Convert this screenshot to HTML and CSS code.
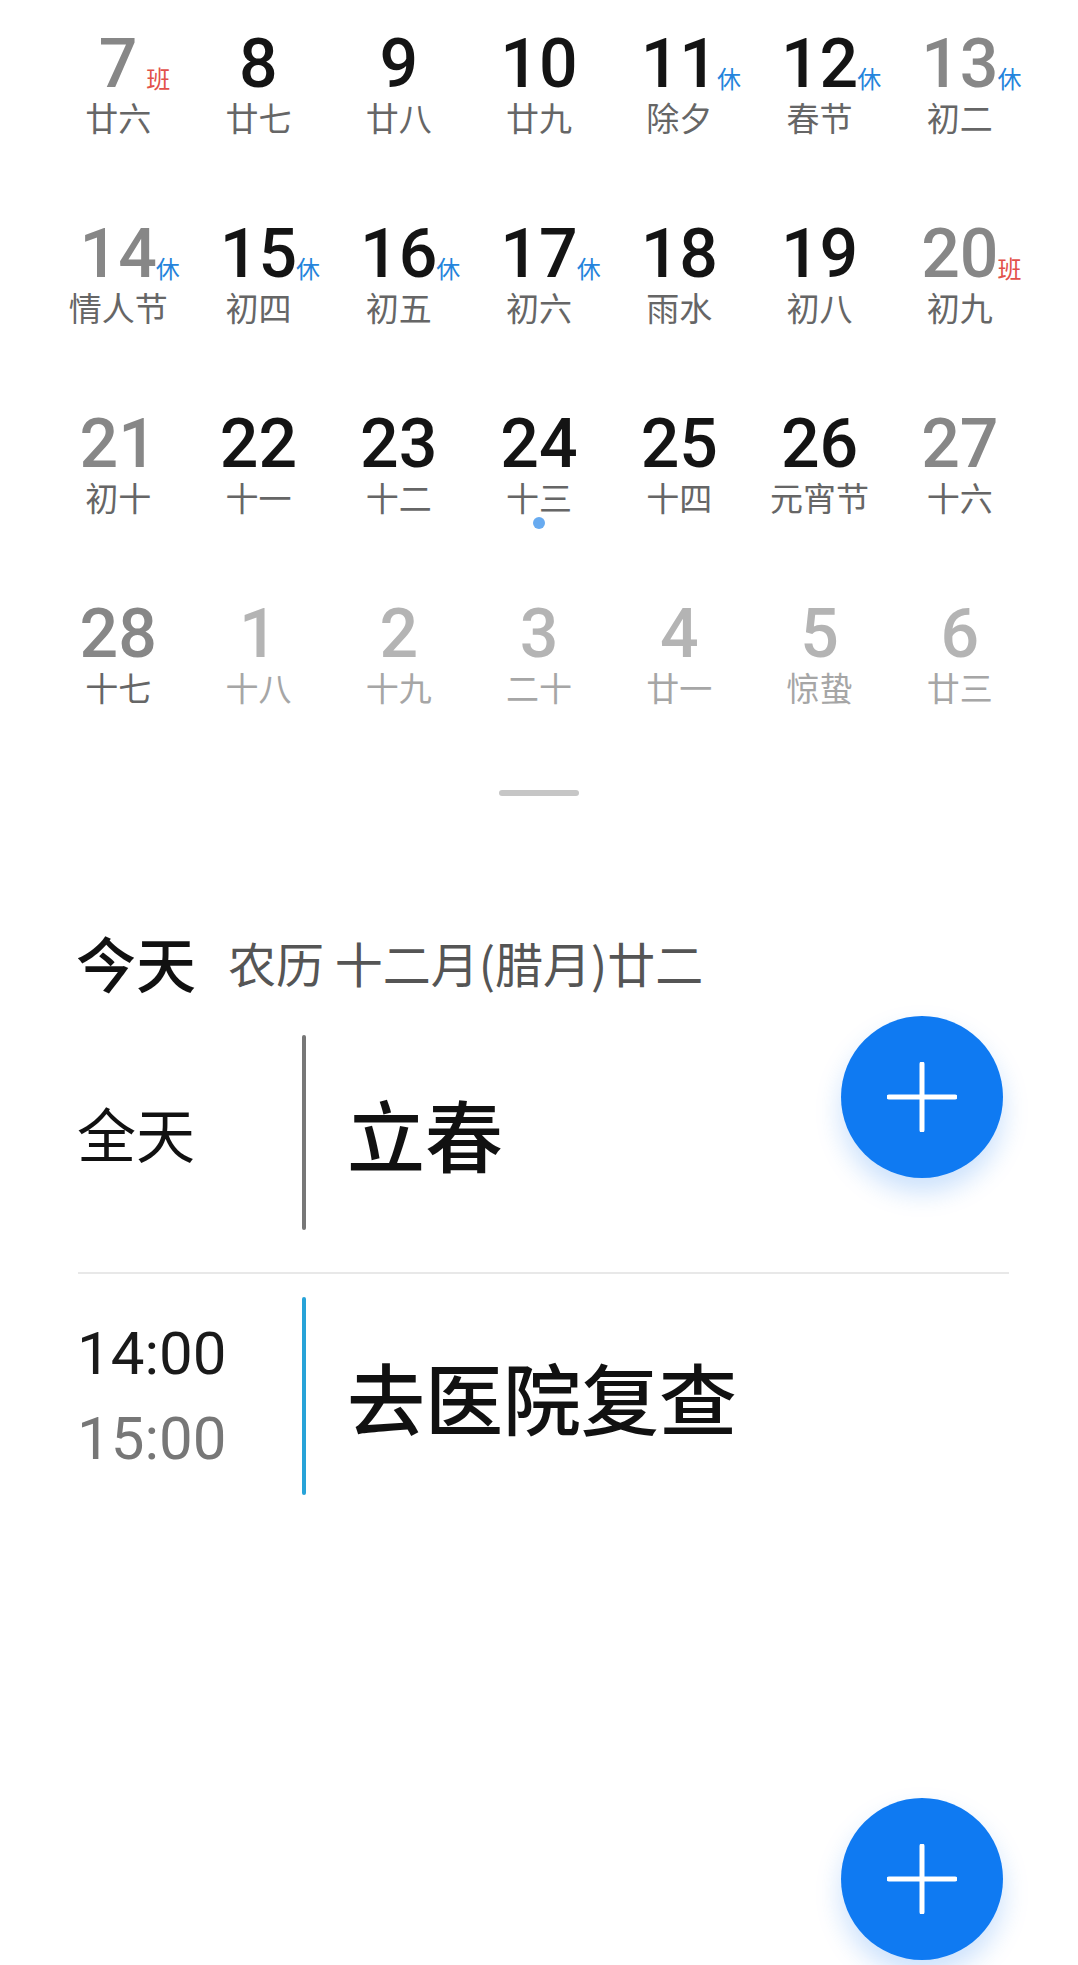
FILE: index.html
```html
<!DOCTYPE html>
<html lang="zh-CN">
<head>
<meta charset="utf-8">
<title>日历</title>
<link rel="stylesheet" href="styles.css">
</head>
<body>
<div class="page">
  <div class="month">
    <div class="cell wkend"><span class="num">7<span class="badge work">班</span></span><span class="lunar">廿六</span></div>
    <div class="cell"><span class="num">8</span><span class="lunar">廿七</span></div>
    <div class="cell"><span class="num">9</span><span class="lunar">廿八</span></div>
    <div class="cell"><span class="num">10</span><span class="lunar">廿九</span></div>
    <div class="cell"><span class="num">11<span class="badge rest">休</span></span><span class="lunar">除夕</span></div>
    <div class="cell"><span class="num">12<span class="badge rest">休</span></span><span class="lunar">春节</span></div>
    <div class="cell wkend"><span class="num">13<span class="badge rest">休</span></span><span class="lunar">初二</span></div>

    <div class="cell wkend"><span class="num">14<span class="badge rest">休</span></span><span class="lunar">情人节</span></div>
    <div class="cell"><span class="num">15<span class="badge rest">休</span></span><span class="lunar">初四</span></div>
    <div class="cell"><span class="num">16<span class="badge rest">休</span></span><span class="lunar">初五</span></div>
    <div class="cell"><span class="num">17<span class="badge rest">休</span></span><span class="lunar">初六</span></div>
    <div class="cell"><span class="num">18</span><span class="lunar">雨水</span></div>
    <div class="cell"><span class="num">19</span><span class="lunar">初八</span></div>
    <div class="cell wkend"><span class="num">20<span class="badge work">班</span></span><span class="lunar">初九</span></div>

    <div class="cell wkend"><span class="num">21</span><span class="lunar">初十</span></div>
    <div class="cell"><span class="num">22</span><span class="lunar">十一</span></div>
    <div class="cell"><span class="num">23</span><span class="lunar">十二</span></div>
    <div class="cell"><span class="num">24</span><span class="lunar">十三</span><span class="dot"></span></div>
    <div class="cell"><span class="num">25</span><span class="lunar">十四</span></div>
    <div class="cell"><span class="num">26</span><span class="lunar">元宵节</span></div>
    <div class="cell wkend"><span class="num">27</span><span class="lunar">十六</span></div>

    <div class="cell wkend"><span class="num">28</span><span class="lunar">十七</span></div>
    <div class="cell next"><span class="num">1</span><span class="lunar">十八</span></div>
    <div class="cell next"><span class="num">2</span><span class="lunar">十九</span></div>
    <div class="cell next"><span class="num">3</span><span class="lunar">二十</span></div>
    <div class="cell next"><span class="num">4</span><span class="lunar">廿一</span></div>
    <div class="cell next"><span class="num">5</span><span class="lunar">惊蛰</span></div>
    <div class="cell next"><span class="num">6</span><span class="lunar">廿三</span></div>
  </div>

  <div class="handle"><span class="handle-bar"></span></div>

  <div class="today">
    <span class="today-title">今天</span>
    <span class="today-lunar">农历 十二月(腊月)廿二</span>
  </div>

  <div class="event">
    <div class="event-time"><span class="allday">全天</span></div>
    <div class="event-line gray"></div>
    <div class="event-title">立春</div>
  </div>

  <div class="divider"></div>

  <div class="event tall">
    <div class="event-time">
      <span class="time-start">14:00</span>
      <span class="time-end">15:00</span>
    </div>
    <div class="event-line blue"></div>
    <div class="event-title">去医院复查</div>
  </div>

  <button class="fab fab-top" aria-label="新建">
    <svg width="70" height="70" viewBox="0 0 70 70"><path d="M35 2 V68 M2 35 H68" stroke="#fff" stroke-width="5" stroke-linecap="round" fill="none"/></svg>
  </button>
  <button class="fab fab-bottom" aria-label="新建">
    <svg width="70" height="70" viewBox="0 0 70 70"><path d="M35 2 V68 M2 35 H68" stroke="#fff" stroke-width="5" stroke-linecap="round" fill="none"/></svg>
  </button>
</div>
</body>
</html>
```

FILE: styles.css
```css
html, body {
  margin: 0;
  padding: 0;
  background: #ffffff;
}

.page {
  position: relative;
  width: 1078px;
  height: 1965px;
  overflow: hidden;
  padding-top: 30px;
  box-sizing: border-box;
  font-family: "Noto Sans CJK SC", "Noto Sans", sans-serif;
}

.month {
  display: grid;
  grid-template-columns: repeat(7, 1fr);
  grid-auto-rows: 190px;
  padding: 0 48px;
}

.cell {
  display: flex;
  flex-direction: column;
  align-items: center;
}

.num {
  position: relative;
  display: inline-block;
  min-width: 58px;
  text-align: center;
  font-family: Roboto, "Liberation Sans", sans-serif;
  font-weight: 500;
  font-size: 68px;
  line-height: 68px;
  color: #141414;
}

.wkend .num { color: #878787; }
.next .num { color: #b4b4b4; }

.badge {
  position: absolute;
  left: 100%;
  top: 36px;
  margin-left: -1px;
  font-family: "Noto Sans CJK SC", sans-serif;
  font-size: 24px;
  line-height: 24px;
  font-weight: 400;
}

.badge.rest { color: #2484dc; }
.badge.work { color: #e2514a; }

.lunar {
  margin-top: 3px;
  font-size: 33px;
  line-height: 33px;
  color: #666666;
  white-space: nowrap;
}

.next .lunar { color: #a6a6a6; }

.dot {
  margin-top: 3px;
  width: 12px;
  height: 12px;
  border-radius: 50%;
  background: #68abf0;
}

.handle {
  display: flex;
  justify-content: center;
  margin-top: 0;
}

.handle-bar {
  width: 80px;
  height: 6px;
  border-radius: 3px;
  background: #c6c6c6;
}

.today {
  display: flex;
  align-items: center;
  margin-top: 131px;
  padding-left: 76px;
  height: 70px;
}

.today-title {
  font-size: 60px;
  font-weight: 500;
  color: #111;
  line-height: 70px;
}

.today-lunar {
  margin-left: 32px;
  font-size: 48px;
  color: #555;
  line-height: 70px;
}

.event {
  display: flex;
  align-items: center;
  height: 195px;
  margin-top: 38px;
  padding-left: 77px;
}

.event.tall {
  height: 198px;
  margin-top: 23px;
}

.event-time {
  width: 225px;
  display: flex;
  flex-direction: column;
}

.allday {
  font-size: 59px;
  line-height: 70px;
  color: #111;
}

.time-start, .time-end {
  font-family: Roboto, "Liberation Sans", sans-serif;
  font-size: 60px;
  line-height: 85px;
}

.time-start { color: #1a1a1a; }
.time-end { color: #777; }

.event-line {
  align-self: stretch;
  width: 4px;
  border-radius: 2px;
}

.event-line.gray { background: #777; }
.event-line.blue { background: #27a3d8; }

.event-title {
  margin-left: 41px;
  font-size: 78px;
  font-weight: 500;
  color: #111;
  line-height: 100px;
}

.divider {
  margin: 42px 69px 0 78px;
  height: 2px;
  background: #e8e8e8;
}

.fab {
  position: absolute;
  left: 841px;
  width: 162px;
  height: 162px;
  border: none;
  padding: 0;
  border-radius: 50%;
  background: #0f7af2;
  display: flex;
  align-items: center;
  justify-content: center;
  box-shadow: 0 14px 26px rgba(20, 120, 240, 0.22);
}

.fab-top { top: 1016px; }
.fab-bottom { top: 1798px; }
```
